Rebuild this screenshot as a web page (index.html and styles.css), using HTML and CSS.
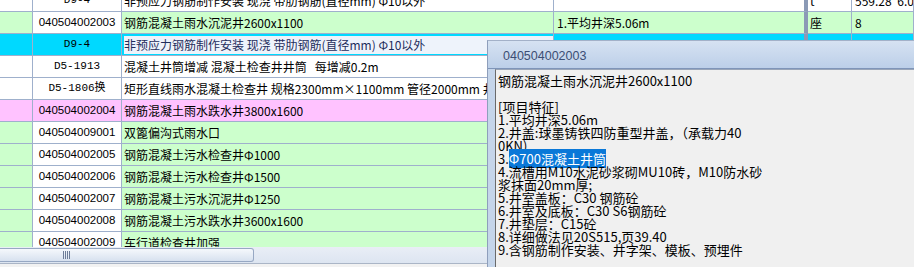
FILE: index.html
```html
<!DOCTYPE html>
<html lang="zh-CN">
<head>
    <meta charset="UTF-8">
    <title>清单项目特征</title>
    <link rel="stylesheet" href="styles.css">
</head>
<body>
    <div class="app">
        <div class="sheet">
            <div class="grid">
                <div class="row">
                    <div class="c"></div>
                    <div class="c code dcode">D9-4</div>
                    <div class="c">非预应力钢筋制作安装 现浇 带肋钢筋(直径mm) Φ10以外</div>
                    <div class="c feat"></div>
                    <div class="c">t</div>
                    <div class="c qty">559.28*6.0</div>
                </div>
                <div class="row green">
                    <div class="c"></div>
                    <div class="c code">040504002003</div>
                    <div class="c">钢筋混凝土雨水沉泥井2600x1100</div>
                    <div class="c feat">1.平均井深5.06m</div>
                    <div class="c">座</div>
                    <div class="c qty">8</div>
                </div>
                <div class="row cyan">
                    <div class="c"></div>
                    <div class="c code dcode">D9-4</div>
                    <div class="c edit">非预应力钢筋制作安装 现浇 带肋钢筋(直径mm) Φ10以外</div>
                    <div class="c feat"></div>
                    <div class="c"></div>
                    <div class="c qty"></div>
                </div>
                <div class="row">
                    <div class="c"></div>
                    <div class="c code dcode">D5-1913</div>
                    <div class="c">混凝土井筒增减 混凝土检查井井筒&nbsp;&nbsp;&nbsp;每增减0.2m</div>
                    <div class="c feat"></div>
                    <div class="c"></div>
                    <div class="c qty"></div>
                </div>
                <div class="row">
                    <div class="c"></div>
                    <div class="c code dcode">D5-1806换</div>
                    <div class="c">矩形直线雨水混凝土检查井 规格2300mm×1100mm 管径2000mm 井深3.5m</div>
                    <div class="c feat"></div>
                    <div class="c"></div>
                    <div class="c qty"></div>
                </div>
                <div class="row pink">
                    <div class="c"></div>
                    <div class="c code">040504002004</div>
                    <div class="c">钢筋混凝土雨水跌水井3800x1600</div>
                    <div class="c feat"></div>
                    <div class="c"></div>
                    <div class="c qty"></div>
                </div>
                <div class="row green">
                    <div class="c"></div>
                    <div class="c code">040504009001</div>
                    <div class="c">双篦偏沟式雨水口</div>
                    <div class="c feat"></div>
                    <div class="c"></div>
                    <div class="c qty"></div>
                </div>
                <div class="row green">
                    <div class="c"></div>
                    <div class="c code">040504002005</div>
                    <div class="c">钢筋混凝土污水检查井Φ1000</div>
                    <div class="c feat"></div>
                    <div class="c"></div>
                    <div class="c qty"></div>
                </div>
                <div class="row green">
                    <div class="c"></div>
                    <div class="c code">040504002006</div>
                    <div class="c">钢筋混凝土污水检查井Φ1500</div>
                    <div class="c feat"></div>
                    <div class="c"></div>
                    <div class="c qty"></div>
                </div>
                <div class="row green">
                    <div class="c"></div>
                    <div class="c code">040504002007</div>
                    <div class="c">钢筋混凝土污水沉泥井Φ1250</div>
                    <div class="c feat"></div>
                    <div class="c"></div>
                    <div class="c qty"></div>
                </div>
                <div class="row green">
                    <div class="c"></div>
                    <div class="c code">040504002008</div>
                    <div class="c">钢筋混凝土污水跌水井3600x1600</div>
                    <div class="c feat"></div>
                    <div class="c"></div>
                    <div class="c qty"></div>
                </div>
                <div class="row green">
                    <div class="c"></div>
                    <div class="c code">040504002009</div>
                    <div class="c">车行道检查井加强</div>
                    <div class="c feat"></div>
                    <div class="c"></div>
                    <div class="c qty"></div>
                </div>
            </div>
        </div>

        <div class="hscroll">
            <div class="thumb"><span class="grip"></span></div>
        </div>
        <div class="status"></div>

        <!-- 项目特征提示窗 -->
        <div class="tip">
            <div class="tip-title">040504002003</div>
            <div class="tip-body">
<div class="memo">钢筋混凝土雨水沉泥井2600x1100

[项目特征]
1.平均井深5.06m
2.井盖:球墨铸铁四防重型井盖，（承载力40
0KN)
3.<span class="sel">Φ700混凝土井筒</span>
4.流槽用M10水泥砂浆砌MU10砖，M10防水砂
浆抹面20mm厚;
5.井室盖板：C30 钢筋砼
6.井室及底板：C30 S6钢筋砼
7.井垫层：C15砼
8.详细做法见20S515,页39.40
9.含钢筋制作安装、井字架、模板、预埋件</div>
            </div>
        </div>
    </div>
</body>
</html>
```

FILE: styles.css
```css
body {
    margin: 0;
    width: 914px;
    height: 267px;
    overflow: hidden;
    background-color: #f0f0f0;
    font-family: "Noto Sans CJK SC", sans-serif;
}
.app {
    position: relative;
    height: 267px;
    overflow: hidden;
}
.sheet {
    height: 247px;
    overflow: hidden;
    background-color: #fff;
}
.grid {
    margin-top: -10px;
}
.row {
    display: grid;
    grid-template-columns: 33px 89px 432px 254px 44px 1fr;
    height: 22px;
}
.c {
    box-sizing: border-box;
    height: 22px;
    border-right: 1px solid #9fb0cc;
    border-bottom: 1px solid #9fb0cc;
    padding-left: 2px;
    font-size: 12px;
    line-height: 21px;
    color: #000;
    white-space: nowrap;
    overflow: hidden;
}
.c.code {
    padding-left: 0;
    text-align: center;
    font-family: "Liberation Sans", sans-serif;
    font-size: 11.5px;
}
.c.dcode {
    font-family: "Liberation Mono", "Noto Sans CJK SC", monospace;
    font-size: 11px;
}
.c.feat {
    border-right: 4px solid #8b9ab6;
    padding-left: 3px;
}
.c.qty {
    padding-left: 3px;
}
.green .c {
    background-color: #ccffcc;
}
.green .c.code {
    background-color: #fff;
}
.pink .c {
    background-color: #ffc2ff;
}
.cyan .c {
    background-color: #00d9ff;
}
.cyan .c.edit {
    background-color: #eef3fb;
    box-shadow: inset 2px 2px 0 #00d9ff, inset 0 -1px 0 #00d9ff;
    color: #1f2d5c;
}
.hscroll {
    box-sizing: border-box;
    height: 16px;
    padding: 1px 0;
    background: linear-gradient(#e9eef6, #dde5f1);
}
.thumb {
    box-sizing: border-box;
    width: 254px;
    height: 14px;
    border: 1px solid #97a8c3;
    border-left: none;
    border-radius: 0 3px 3px 0;
    background: linear-gradient(#f5f8fc, #d7e1ef);
    display: flex;
    align-items: center;
    padding-left: 63px;
}
.grip {
    width: 7px;
    height: 8px;
    background: repeating-linear-gradient(90deg, #6e7d98 0 1px, transparent 1px 2px);
}
.status {
    height: 4px;
    border-top: 1px solid #aab5c6;
    background-color: #f2f2f2;
}
.tip {
    position: absolute;
    left: 487px;
    top: 40px;
    right: -10px;
    bottom: 0;
    display: flex;
    flex-direction: column;
    background-color: #c5d5ea;
    border-top: 1px solid #a3b1c8;
    border-left: 1px solid #8e9ebb;
}
.tip-title {
    height: 27px;
    padding-left: 15px;
    line-height: 30px;
    font-family: "Liberation Sans", sans-serif;
    font-size: 12.5px;
    color: #3c4e74;
    background: linear-gradient(#d6e2f2, #bccfe8);
}
.tip-body {
    flex: 1;
    display: flex;
    padding-left: 7px;
    border-top: 1px solid #7f95b8;
}
.memo {
    box-sizing: border-box;
    flex: 1;
    border-left: 1px solid #6a6a6a;
    border-top: 1px solid #9aa6b8;
    background-color: #f0f0f0;
    padding: 4px 0 0 2px;
    font-size: 13px;
    line-height: 13px;
    color: #000;
    white-space: pre;
}
.sel {
    background-color: #0a78d8;
    color: #fff;
}
```
